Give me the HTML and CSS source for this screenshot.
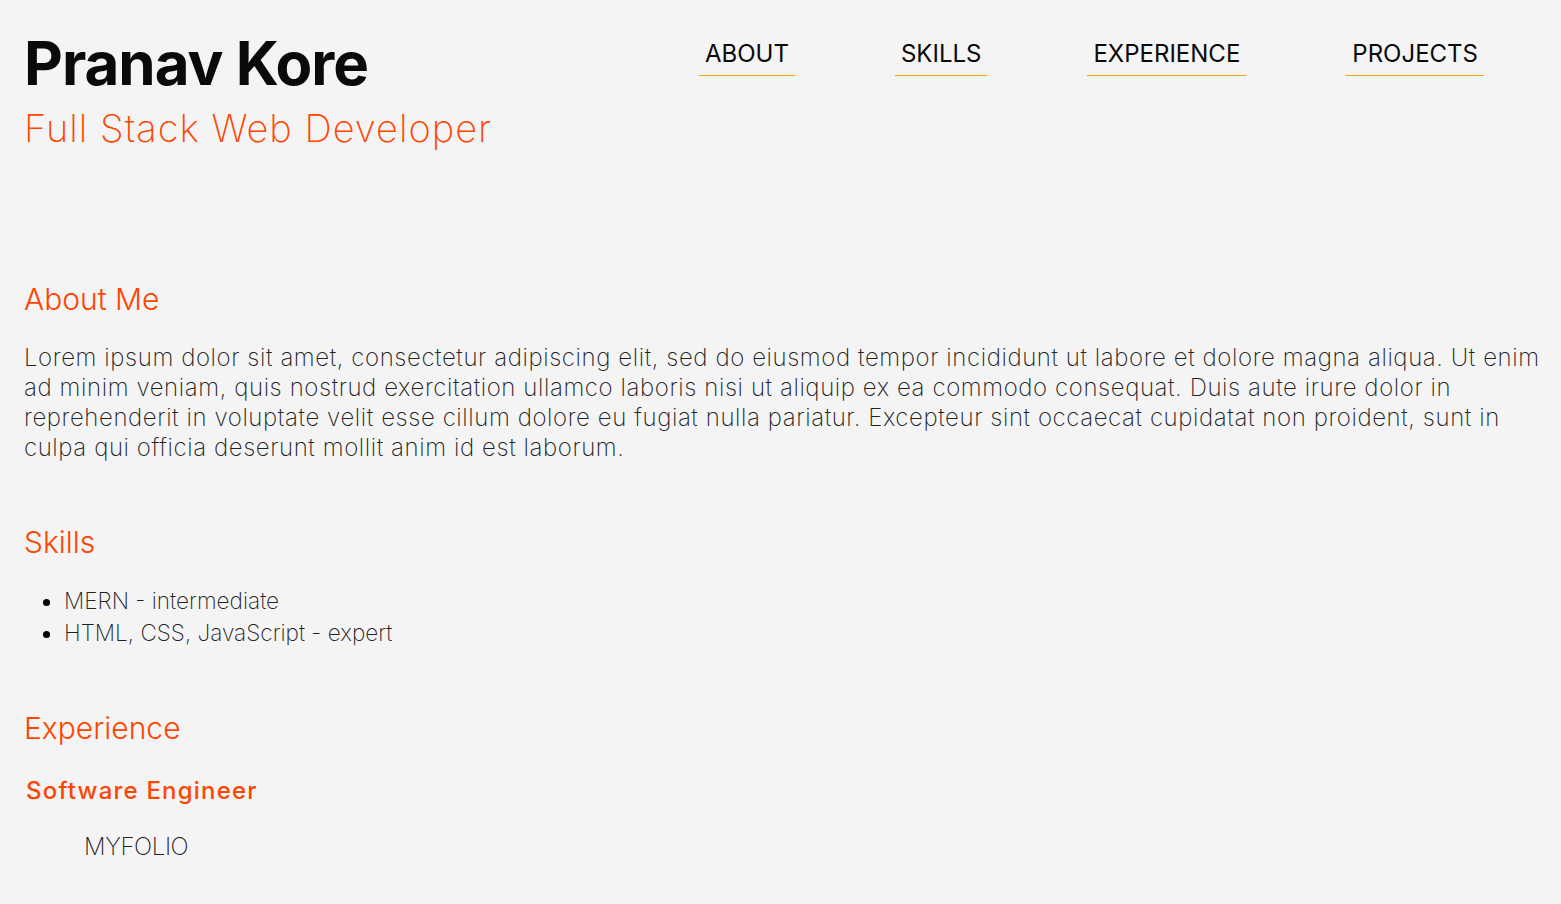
FILE: index.html
```html
<!DOCTYPE html>
<html lang="en">
<head>
<meta charset="utf-8">
<title>Pranav Kore</title>
<link rel="stylesheet" href="styles.css">
</head>
<body>
<header class="header">
  <div class="intro">
    <h1 class="name">Pranav Kore</h1>
    <p class="role">Full Stack Web Developer</p>
  </div>
  <nav class="nav">
    <ul class="nav-list">
      <li><a class="nav-link" href="#about">ABOUT</a></li>
      <li><a class="nav-link" href="#skills">SKILLS</a></li>
      <li><a class="nav-link" href="#experience">EXPERIENCE</a></li>
      <li><a class="nav-link" href="#projects">PROJECTS</a></li>
    </ul>
  </nav>
</header>
<main>
  <section class="section section-first" id="about">
    <h2 class="section-title">About Me</h2>
    <p class="about-text">Lorem ipsum dolor sit amet, consectetur adipiscing elit, sed do eiusmod tempor incididunt ut labore et dolore magna aliqua. Ut enim ad minim veniam, quis nostrud exercitation ullamco laboris nisi ut aliquip ex ea commodo consequat. Duis aute irure dolor in reprehenderit in voluptate velit esse cillum dolore eu fugiat nulla pariatur. Excepteur sint occaecat cupidatat non proident, sunt in culpa qui officia deserunt mollit anim id est laborum.</p>
  </section>
  <section class="section" id="skills">
    <h2 class="section-title">Skills</h2>
    <ul class="skills-list">
      <li>MERN - intermediate</li>
      <li>HTML, CSS, JavaScript - expert</li>
    </ul>
  </section>
  <section class="section" id="experience">
    <h2 class="section-title">Experience</h2>
    <h3 class="job-title">Software Engineer</h3>
    <p class="company">MYFOLIO</p>
  </section>
</main>
</body>
</html>
```
FILE: styles.css
```css
* {
  box-sizing: border-box;
}

html, body {
  background: #f4f4f4;
}

body {
  margin: 0;
  padding: 0 16px 0 24px;
  font-family: Inter, "Noto Sans", "Liberation Sans", sans-serif;
  color: #222;
}

.header {
  display: flex;
  justify-content: space-between;
  align-items: flex-start;
  padding-top: 27px;
  padding-right: 10px;
}

.name {
  margin: 0;
  font-size: 60px;
  line-height: 72px;
  font-weight: 700;
  color: #0a0a0a;
  letter-spacing: -1px;
}

.role {
  margin: 6px 0 0;
  font-size: 38px;
  line-height: 46px;
  font-weight: 200;
  letter-spacing: 1px;
  color: #ff4500;
}

.nav {
  margin-top: 11px;
}

.nav-list {
  display: flex;
  list-style: none;
  margin: 0;
  padding: 0;
}

.nav-list li {
  margin: 0 50px;
}

.nav-list li:last-child {
  margin-right: 51px;
}

.nav-link {
  display: block;
  padding: 1px 6px 6px;
  font-size: 24px;
  line-height: 30px;
  font-weight: 400;
  color: #0a0a0a;
  text-decoration: none;
  border-bottom: 1px solid #f0a800;
}

.section {
  margin-top: 61px;
}

.section-first {
  margin-top: 130px;
}

.section-title {
  margin: 0;
  font-size: 30px;
  line-height: 36px;
  font-weight: 300;
  color: #ff4500;
}

.about-text {
  margin: 26px 0 0;
  font-size: 24px;
  line-height: 30px;
  font-weight: 200;
  letter-spacing: 0.58px;
}

.skills-list {
  margin: 25px 0 0;
  padding-left: 40px;
  font-size: 22.6px;
  line-height: 32px;
  font-weight: 200;
}

.skills-list li::marker {
  color: #000;
}

.job-title {
  margin: 30px 0 0 2px;
  font-size: 24px;
  line-height: 30px;
  font-weight: 500;
  letter-spacing: 1.2px;
  color: #ff4500;
}

.company {
  margin: 26px 0 0;
  padding-left: 60px;
  font-size: 24px;
  line-height: 30px;
  font-weight: 200;
  letter-spacing: -0.4px;
}
```
